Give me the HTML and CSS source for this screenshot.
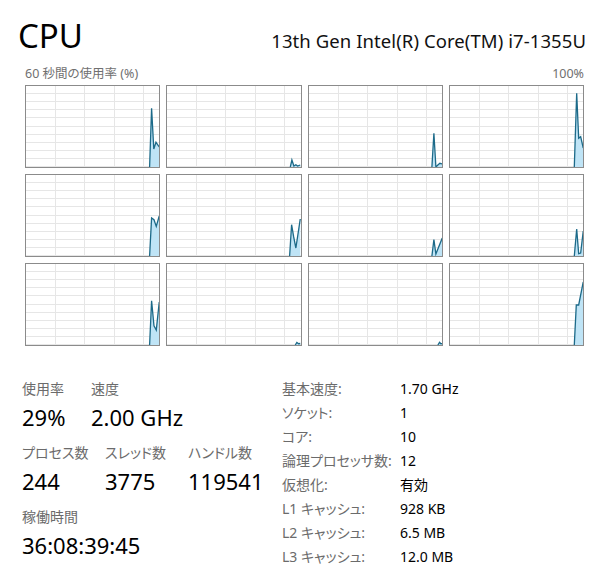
FILE: index.html
```html
<!DOCTYPE html>
<html lang="ja">
<head>
<meta charset="utf-8">
<title>CPU</title>
<link rel="stylesheet" href="styles.css">
</head>
<body>
<div class="page">
  <header class="head">
    <h1 class="title">CPU</h1>
    <div class="model">13th Gen Intel(R) Core(TM) i7-1355U</div>
  </header>

  <div class="axis"><span>60 秒間の使用率 (%)</span><span>100%</span></div>

  <div class="charts">
    <div class="chart"><svg viewBox="0 0 134 81" preserveAspectRatio="none"><path class="area" d="M124.3 81 L126.3 22.3 L128.5 63 L130.7 56.3 L134 61 L134 81 Z"/><path class="line" d="M124.3 81 L126.3 22.3 L128.5 63 L130.7 56.3 L134 61"/></svg></div>
    <div class="chart"><svg viewBox="0 0 134 81" preserveAspectRatio="none"><path class="area" d="M124 81 L125.6 74 L127.6 80 L129.6 78.7 L131.3 80 L134 79 L134 81 Z"/><path class="line" d="M124 81 L125.6 74 L127.6 80 L129.6 78.7 L131.3 80 L134 79"/></svg></div>
    <div class="chart"><svg viewBox="0 0 134 81" preserveAspectRatio="none"><path class="area" d="M123.6 81 L125.6 47.3 L127.6 81 L129.6 79 L131.6 77.3 L134 78 L134 81 Z"/><path class="line" d="M123.6 81 L125.6 47.3 L127.6 81 L129.6 79 L131.6 77.3 L134 78"/></svg></div>
    <div class="chart"><svg viewBox="0 0 134 81" preserveAspectRatio="none"><path class="area" d="M125 81 L127.4 7.3 L129.4 52.3 L131.4 50.7 L134 62 L134 81 Z"/><path class="line" d="M125 81 L127.4 7.3 L129.4 52.3 L131.4 50.7 L134 62"/></svg></div>

    <div class="chart"><svg viewBox="0 0 134 81" preserveAspectRatio="none"><path class="area" d="M124.3 81 L126.3 43 L128.7 44.7 L131 51.4 L134 41 L134 81 Z"/><path class="line" d="M124.3 81 L126.3 43 L128.7 44.7 L131 51.4 L134 41"/></svg></div>
    <div class="chart"><svg viewBox="0 0 134 81" preserveAspectRatio="none"><path class="area" d="M123.3 81 L125.3 49.7 L127.3 61.4 L129.6 73 L134 44 L134 81 Z"/><path class="line" d="M123.3 81 L125.3 49.7 L127.3 61.4 L129.6 73 L134 44"/></svg></div>
    <div class="chart"><svg viewBox="0 0 134 81" preserveAspectRatio="none"><path class="area" d="M123.6 81 L125.6 64.7 L127.6 79 L130 73 L134 63 L134 81 Z"/><path class="line" d="M123.6 81 L125.6 64.7 L127.6 79 L130 73 L134 63"/></svg></div>
    <div class="chart"><svg viewBox="0 0 134 81" preserveAspectRatio="none"><path class="area" d="M125 81 L127.4 54 L129.4 78.7 L131.4 78 L134 56 L134 81 Z"/><path class="line" d="M125 81 L127.4 54 L129.4 78.7 L131.4 78 L134 56"/></svg></div>

    <div class="chart"><svg viewBox="0 0 134 81" preserveAspectRatio="none"><path class="area" d="M124.3 81 L126.3 36.7 L128.7 61.7 L131 66 L134 38 L134 81 Z"/><path class="line" d="M124.3 81 L126.3 36.7 L128.7 61.7 L131 66 L134 38"/></svg></div>
    <div class="chart"><svg viewBox="0 0 134 81" preserveAspectRatio="none"><path class="area" d="M129 81 L130.6 78.4 L132.3 79.7 L134 79.5 L134 81 Z"/><path class="line" d="M129 81 L130.6 78.4 L132.3 79.7 L134 79.5"/></svg></div>
    <div class="chart"><svg viewBox="0 0 134 81" preserveAspectRatio="none"><path class="area" d="M129.6 81 L131.3 78.4 L132.6 79.7 L134 79.5 L134 81 Z"/><path class="line" d="M129.6 81 L131.3 78.4 L132.6 79.7 L134 79.5"/></svg></div>
    <div class="chart"><svg viewBox="0 0 134 81" preserveAspectRatio="none"><path class="area" d="M125 81 L127 41 L129.4 41 L134 18 L134 81 Z"/><path class="line" d="M125 81 L127 41 L129.4 41 L134 18"/></svg></div>
  </div>

  <section class="stats">
    <div class="live">
      <div class="row">
        <div class="stat w1"><div class="lbl">使用率</div><div class="val">29%</div></div>
        <div class="stat"><div class="lbl">速度</div><div class="val">2.00 GHz</div></div>
      </div>
      <div class="row">
        <div class="stat w2"><div class="lbl">プロセス数</div><div class="val">244</div></div>
        <div class="stat w2"><div class="lbl">スレッド数</div><div class="val">3775</div></div>
        <div class="stat"><div class="lbl">ハンドル数</div><div class="val">119541</div></div>
      </div>
      <div class="row">
        <div class="stat"><div class="lbl">稼働時間</div><div class="val">36:08:39:45</div></div>
      </div>
    </div>
    <dl class="specs">
      <dt>基本速度:</dt><dd>1.70 GHz</dd>
      <dt>ソケット:</dt><dd>1</dd>
      <dt>コア:</dt><dd>10</dd>
      <dt>論理プロセッサ数:</dt><dd>12</dd>
      <dt>仮想化:</dt><dd>有効</dd>
      <dt>L1 キャッシュ:</dt><dd>928 KB</dd>
      <dt>L2 キャッシュ:</dt><dd>6.5 MB</dd>
      <dt>L3 キャッシュ:</dt><dd>12.0 MB</dd>
    </dl>
  </section>
</div>
</body>
</html>
```

FILE: styles.css
```css
html, body {
  margin: 0;
  padding: 0;
  background: #ffffff;
}

body {
  font-family: "Noto Sans", "Noto Sans CJK JP", sans-serif;
  font-feature-settings: "palt";
  color: #000000;
}

.page {
  padding: 0 14px 0 18px;
}

.head {
  display: flex;
  align-items: baseline;
  justify-content: space-between;
  padding-top: 16px;
  height: 40px;
}

.title {
  margin: 0;
  font-size: 33px;
  font-weight: 400;
  line-height: 40px;
}

.model {
  font-size: 18.5px;
  letter-spacing: 0.08px;
  line-height: 40px;
  color: #111111;
}

.axis {
  display: flex;
  justify-content: space-between;
  margin: 10px 2px 0 7px;
  font-size: 12.5px;
  line-height: 16px;
  color: #707070;
}

.charts {
  display: grid;
  grid-template-columns: repeat(4, 1fr);
  grid-auto-rows: 83px;
  gap: 6px;
  margin: 3px 2px 0 7px;
}

.chart {
  box-sizing: border-box;
  border: 1px solid #8b8b8b;
  background-color: #ffffff;
  background-image:
    repeating-linear-gradient(to bottom, transparent 0 7.1px, #e6e6e6 7.1px 8.1px),
    repeating-linear-gradient(to right, transparent 0 28.6px, #e6e6e6 28.6px 29.6px);
  overflow: hidden;
}

.chart svg {
  display: block;
  width: 100%;
  height: 100%;
}

.area {
  fill: #bfe4f6;
  stroke: none;
}

.line {
  fill: none;
  stroke: #1c6a89;
  stroke-width: 1.3;
  vector-effect: non-scaling-stroke;
  stroke-linejoin: miter;
}

.stats {
  display: flex;
  margin-top: 31px;
  padding-left: 4px;
}

.live {
  width: 260px;
  padding-top: 2px;
}

.row {
  display: flex;
}

.row + .row {
  margin-top: 8px;
}

.w1 { width: 69px; }
.w2 { width: 83px; }

.lbl {
  font-size: 14px;
  line-height: 20px;
  color: #6b6b6b;
}

.val {
  font-size: 22px;
  line-height: 36px;
  color: #000000;
}

.specs {
  display: grid;
  grid-template-columns: 118px auto;
  margin: 0;
  font-size: 14px;
  line-height: 24px;
}

.specs dt {
  color: #6b6b6b;
}

.specs dd {
  margin: 0;
  color: #000000;
}
```
